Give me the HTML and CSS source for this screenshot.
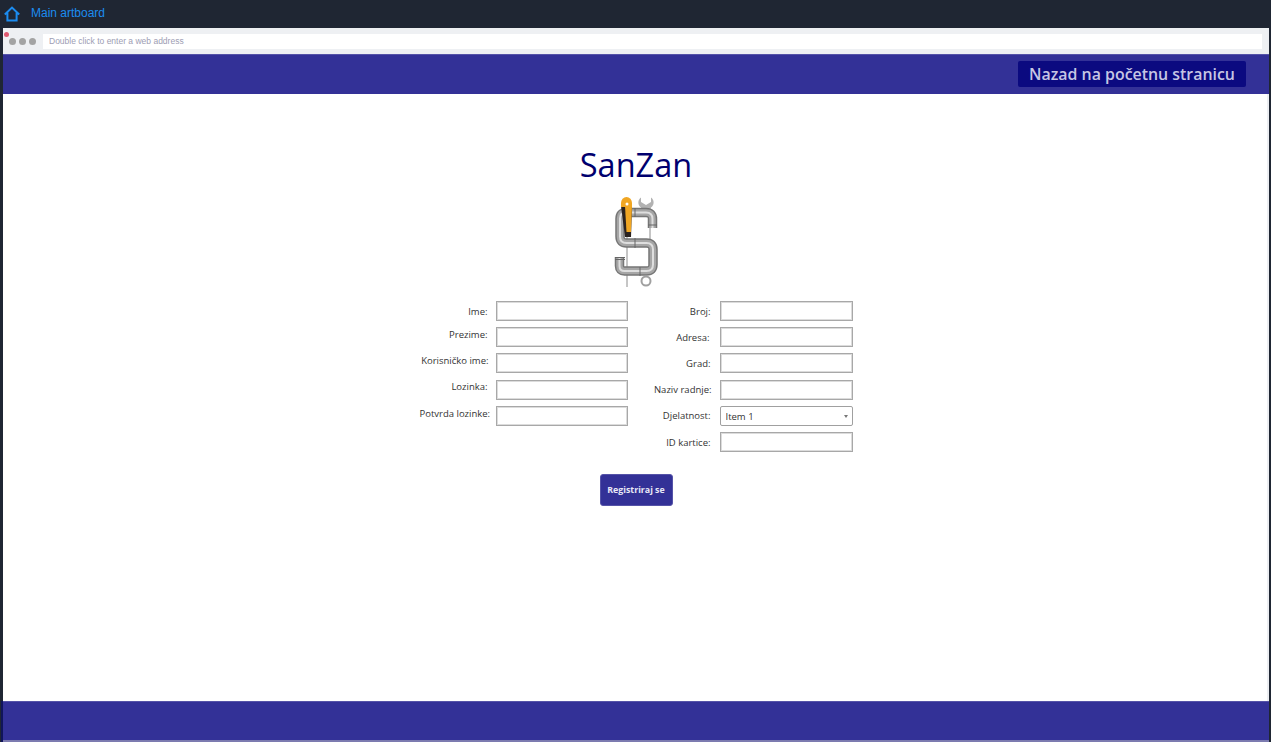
FILE: index.html
```html
<!DOCTYPE html>
<html lang="hr">
<head>
<meta charset="utf-8">
<title>SanZan</title>
<link rel="stylesheet" href="styles.css">
</head>
<body>
<header class="topbar">
  <svg class="home-icon" width="16" height="16" viewBox="0 0 16 16" aria-hidden="true">
    <path d="M.8 8.400 8 1.600l7.200 6.800M3.400 6.800v7.600h9.200V6.800" fill="none" stroke="#1c8cf0" stroke-width="2"/>
  </svg>
  <span class="artboard-name">Main artboard</span>
</header>
<div class="frame">
  <div class="browser-bar">
    <span class="rec-dot"></span>
    <span class="dots"><i></i><i></i><i></i></span>
    <div class="address">Double click to enter a web address</div>
  </div>
  <nav class="nav">
    <a class="back-link">Nazad na početnu stranicu</a>
  </nav>
  <main class="content">
    <h1 class="brand">SanZan</h1>
    <svg class="logo" width="56" height="95" viewBox="608 195 56 95" aria-hidden="true">
      <path d="M627 237V287M650 215V240" stroke="#8c8c8c" stroke-width="1" fill="none"/>
      <path d="M641 197.500C637.500 200 637.500 205 641 207.500L643 213h6l2-5.500C654.500 205 654.500 200 651 197.500V202L646 205L641 202z" fill="#b2b2b2"/>
      <path d="M652.500 228v-9q0-6.500-6.500-6.500h-20q-6 0-6 6v18q0 6.500 6.500 6.500h20q6.500 0 6.500 6.500v15q0 6.500-6.500 6.500h-22q-5 0-5-5v-9" fill="none" stroke="#767676" stroke-width="9.500"/>
      <path d="M652.500 228v-9q0-6.500-6.500-6.500h-20q-6 0-6 6v18q0 6.500 6.500 6.500h20q6.500 0 6.500 6.500v15q0 6.500-6.500 6.500h-22q-5 0-5-5v-9" fill="none" stroke="#a6a6a6" stroke-width="6.500"/>
      <path d="M652.500 228v-9q0-6.500-6.500-6.500h-20q-6 0-6 6v18q0 6.500 6.500 6.500h20q6.500 0 6.500 6.500v15q0 6.500-6.500 6.500h-22q-5 0-5-5v-9" fill="none" stroke="#dedede" stroke-width="2"/>
      <path d="M615 259.500h10M615 257.500h10M648 225h9M635 208v9M635 238v10M640 267v9" stroke="#666" stroke-width="1" fill="none"/>
      <circle cx="646" cy="281" r="4.500" fill="none" stroke="#a0a0a0" stroke-width="2"/>
      <path d="M621 206h11l-1 31h-6z" fill="#2b2320"/>
      <path d="M625 206h7l-1 26h-4.500z" fill="#f0a623"/>
      <path d="M621 207v-4a5.500 6 0 0 1 11 0v4z" fill="#f0a623"/>
      <circle cx="627" cy="204" r="1.500" fill="#fff"/>
    </svg>
    <form class="form">
      <div class="col">
        <div class="row row-left"><label class="lbl">Ime:</label><input class="field" type="text"></div>
        <div class="row row-left"><label class="lbl lift-4">Prezime:</label><input class="field" type="text"></div>
        <div class="row row-left"><label class="lbl lift-3 shift-1">Korisničko ime:</label><input class="field" type="text"></div>
        <div class="row row-left"><label class="lbl lift-4">Lozinka:</label><input class="field" type="text"></div>
        <div class="row row-left"><label class="lbl lift-3 shift-2">Potvrda lozinke:</label><input class="field" type="text"></div>
      </div>
      <div class="col col-right">
        <div class="row row-right"><label class="lbl">Broj:</label><input class="field" type="text"></div>
        <div class="row row-right"><label class="lbl shift-back">Adresa:</label><input class="field" type="text"></div>
        <div class="row row-right"><label class="lbl">Grad:</label><input class="field" type="text"></div>
        <div class="row row-right"><label class="lbl shift-2">Naziv radnje:</label><input class="field" type="text"></div>
        <div class="row row-right"><label class="lbl">Djelatnost:</label><div class="select-wrap"><select class="select"><option>Item 1</option></select></div></div>
        <div class="row row-right"><label class="lbl">ID kartice:</label><input class="field" type="text"></div>
      </div>
    </form>
    <button class="submit" type="button">Registriraj se</button>
  </main>
  <footer class="footer"></footer>
</div>
</body>
</html>
```
FILE: styles.css
```css
* { box-sizing: border-box; }
html, body { margin: 0; height: 742px; overflow: hidden; }
body {
  background: #1f2633;
  font-family: "Open Sans", "Noto Sans", sans-serif;
  display: flex;
  flex-direction: column;
}
.topbar {
  height: 28px;
  flex: none;
  display: flex;
  align-items: center;
  padding-left: 4px;
  gap: 11px;
  background: #1f2633;
}
.home-icon { margin-top: -1px; }
.artboard-name {
  font: 12px "Liberation Sans", Arial, sans-serif;
  color: #1c8cf0;
  margin-top: -2px;
}
.frame {
  flex: 1;
  display: flex;
  flex-direction: column;
  margin: 0 2px 0 3px;
  background: #fff;
  border-right: 2px solid #eceef2;
}
.browser-bar {
  height: 26px;
  flex: none;
  display: flex;
  align-items: center;
  background: #eef0f3;
  position: relative;
  padding: 1px 5px 0 6px;
}
.rec-dot {
  position: absolute;
  left: 1px;
  top: 4px;
  width: 5px;
  height: 5px;
  border-radius: 50%;
  background: #dd5870;
}
.dots { display: flex; gap: 3px; width: 34px; flex: none; }
.dots i { width: 7px; height: 7px; border-radius: 50%; background: #a3a3a3; }
.address {
  flex: 1;
  height: 15px;
  background: #fff;
  font: 8.500px/15px "Liberation Sans", Arial, sans-serif;
  color: #9d9db3;
  padding-left: 6px;
}
.nav {
  height: 40px;
  flex: none;
  background: #333197;
  border-top: 1px solid #5553a8;
  display: flex;
  justify-content: flex-end;
  align-items: center;
  padding: 0 23px 1px 0;
  margin-right: -2px;
}
.back-link {
  width: 228px;
  height: 26px;
  background: #0b0a80;
  border-radius: 2px;
  color: #c6c6e4;
  font-size: 15.900px;
  font-weight: 600;
  line-height: 26px;
  text-align: center;
}
.content {
  flex: 1;
  display: flex;
  flex-direction: column;
  align-items: center;
  padding: 47px 0 0 2px;
}
.brand {
  margin: 0;
  font-size: 32.500px;
  line-height: 48px;
  font-weight: 400;
  color: #00006e;
}
.logo { display: block; margin-top: 6px; }
.form { display: flex; margin-top: 11px; width: 433px; }
.col { display: flex; flex-direction: column; }
.row { display: flex; align-items: center; height: 26.2px; }
.row-left { width: 208px; }
.row-right { width: 225px; }
.lbl {
  flex: none;
  text-align: right;
  font-size: 9.500px;
  color: #333;
  white-space: nowrap;
  padding-right: 8px;
  padding-bottom: 6px;
}
.row-left .lbl { width: 76px; }
.row-right .lbl { width: 92px; padding-right: 9px; }
.lift-4 { padding-bottom: 12px; }
.lift-3 { padding-bottom: 11px; }
.row-left .shift-1 { padding-right: 7px; }
.row-left .shift-2 { padding-right: 6px; }
.row-right .shift-2 { padding-right: 8px; }
.row-right .shift-back { padding-right: 10px; }
.field, .select-wrap {
  width: 132px;
  height: 20px;
  margin-bottom: 6px;
  flex: none;
}
.row-right .field, .row-right .select-wrap { width: 133px; }
.field {
  background: #fff;
  border: 1px solid #a8a8a8;
  box-shadow: inset 0 0 0 1px #dcdcdc;
  padding: 0;
}
.select-wrap { position: relative; }
.select-wrap::after {
  content: "";
  position: absolute;
  right: 5px;
  top: 9px;
  border: 2.500px solid transparent;
  border-top: 3px solid #777;
  border-bottom: 0;
}
.select {
  display: block;
  appearance: none;
  width: 100%;
  height: 100%;
  background: #fff;
  border: 1px solid #a0a0a0;
  border-radius: 2px;
  font: 9.500px "Open Sans", "Noto Sans", sans-serif;
  color: #333;
  padding: 1px 0 0 5px;
}
.submit {
  width: 73px;
  height: 32px;
  margin-top: 16px;
  background: #333197;
  border: 1px solid #5553a8;
  border-radius: 3px;
  color: #e8e8f6;
  font: 700 8.800px "Open Sans", "Noto Sans", sans-serif;
  padding: 0;
}
.footer {
  height: 41px;
  flex: none;
  background: #333197;
  border-top: 1px solid #5553a8;
  border-bottom: 2px solid #7c7bb0;
  margin-right: -2px;
  box-shadow: -2px 0 0 #10145c;
}
```
